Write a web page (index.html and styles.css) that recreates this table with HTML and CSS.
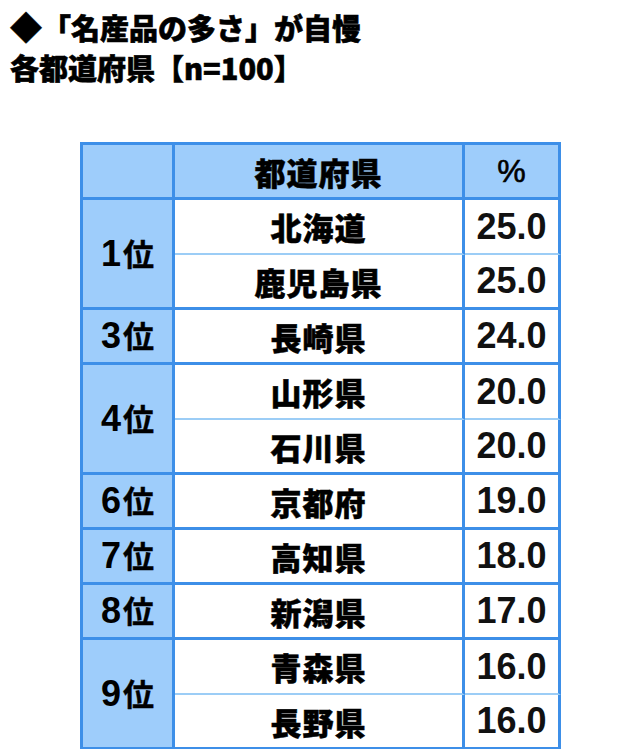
FILE: index.html
```html
<!DOCTYPE html>
<html lang="ja">
<head>
<meta charset="utf-8">
<title>「名産品の多さ」が自慢 各都道府県</title>
<link rel="stylesheet" href="styles.css">
</head>
<body>
<h1 class="title"><span class="diamond">◆</span>「名産品の多さ」が自慢<br>各都道府県【n=100】</h1>
<table class="rank-table">
  <thead>
    <tr>
      <th class="c-rank"></th>
      <th class="c-name">都道府県</th>
      <th class="c-pct">%</th>
    </tr>
  </thead>
  <tbody>
    <tr class="sub">
      <td class="rank" rowspan="2"><span class="num">1</span>位</td>
      <td class="name">北海道</td>
      <td class="pct">25.0</td>
    </tr>
    <tr>
      <td class="name">鹿児島県</td>
      <td class="pct">25.0</td>
    </tr>
    <tr>
      <td class="rank"><span class="num">3</span>位</td>
      <td class="name">長崎県</td>
      <td class="pct">24.0</td>
    </tr>
    <tr class="sub">
      <td class="rank" rowspan="2"><span class="num">4</span>位</td>
      <td class="name">山形県</td>
      <td class="pct">20.0</td>
    </tr>
    <tr>
      <td class="name">石川県</td>
      <td class="pct">20.0</td>
    </tr>
    <tr>
      <td class="rank"><span class="num">6</span>位</td>
      <td class="name">京都府</td>
      <td class="pct">19.0</td>
    </tr>
    <tr>
      <td class="rank"><span class="num">7</span>位</td>
      <td class="name">高知県</td>
      <td class="pct">18.0</td>
    </tr>
    <tr>
      <td class="rank"><span class="num">8</span>位</td>
      <td class="name">新潟県</td>
      <td class="pct">17.0</td>
    </tr>
    <tr class="sub">
      <td class="rank" rowspan="2"><span class="num">9</span>位</td>
      <td class="name">青森県</td>
      <td class="pct">16.0</td>
    </tr>
    <tr>
      <td class="name">長野県</td>
      <td class="pct">16.0</td>
    </tr>
  </tbody>
</table>
</body>
</html>
```

FILE: styles.css
```css
html, body {
  background: #ffffff;
}
body {
  margin: 0;
  padding: 7px 0 0 10px;
  color: #000000;
  font-family: "Noto Sans CJK JP", "Liberation Sans", sans-serif;
}
.title {
  margin: 0;
  font-size: 29px;
  line-height: 40px;
  font-weight: 900;
  letter-spacing: 0;
  -webkit-text-stroke: 0.6px #000000;
}
.diamond {
  font-size: 32px;
  line-height: 29px;
}
.rank-table {
  margin: 55px 0 0 70px;
  border-collapse: separate;
  border-spacing: 0;
  table-layout: fixed;
  width: 481px;
  border-top: 3px solid #3d8fe8;
  border-left: 3px solid #3d8fe8;
  font-family: "Liberation Sans", "Noto Sans CJK JP", sans-serif;
  font-weight: 700;
}
.rank-table th,
.rank-table td {
  box-sizing: border-box;
  padding: 0;
  text-align: center;
  vertical-align: middle;
  border-right: 3px solid #3d8fe8;
  border-bottom: 3px solid #3d8fe8;
  font-size: 31px;
  line-height: 1;
  font-weight: 700;
}
.rank-table tr {
  height: 55px;
}
.c-rank { width: 92px; }
.c-name { width: 290px; }
.c-pct { width: 96px; }
.rank-table th {
  background: #9ecdfb;
}
.rank-table th.c-name {
  font-family: "Noto Sans CJK JP", sans-serif;
  font-weight: 900;
  letter-spacing: 1px;
  -webkit-text-stroke: 0.5px #000000;
}
.rank-table th.c-pct {
  font-size: 32px;
  font-weight: 400;
  -webkit-text-stroke: 0.6px #000000;
}
.rank-table td.rank {
  background: #9ecdfb;
  font-family: "Liberation Sans", "Noto Sans CJK JP", sans-serif;
  -webkit-text-stroke: 0.4px #000000;
}
.rank-table td.name {
  font-family: "Noto Sans CJK JP", sans-serif;
  font-weight: 900;
  letter-spacing: 1px;
  -webkit-text-stroke: 0.5px #000000;
}
.rank-table td.pct {
  font-size: 36px;
  color: #111111;
}
.num {
  font-size: 36px;
  margin-right: 2px;
  -webkit-text-stroke: 0;
}
.rank-table tr.sub td.name,
.rank-table tr.sub td.pct {
  border-bottom: 2px solid #9ccdf6;
}
```
